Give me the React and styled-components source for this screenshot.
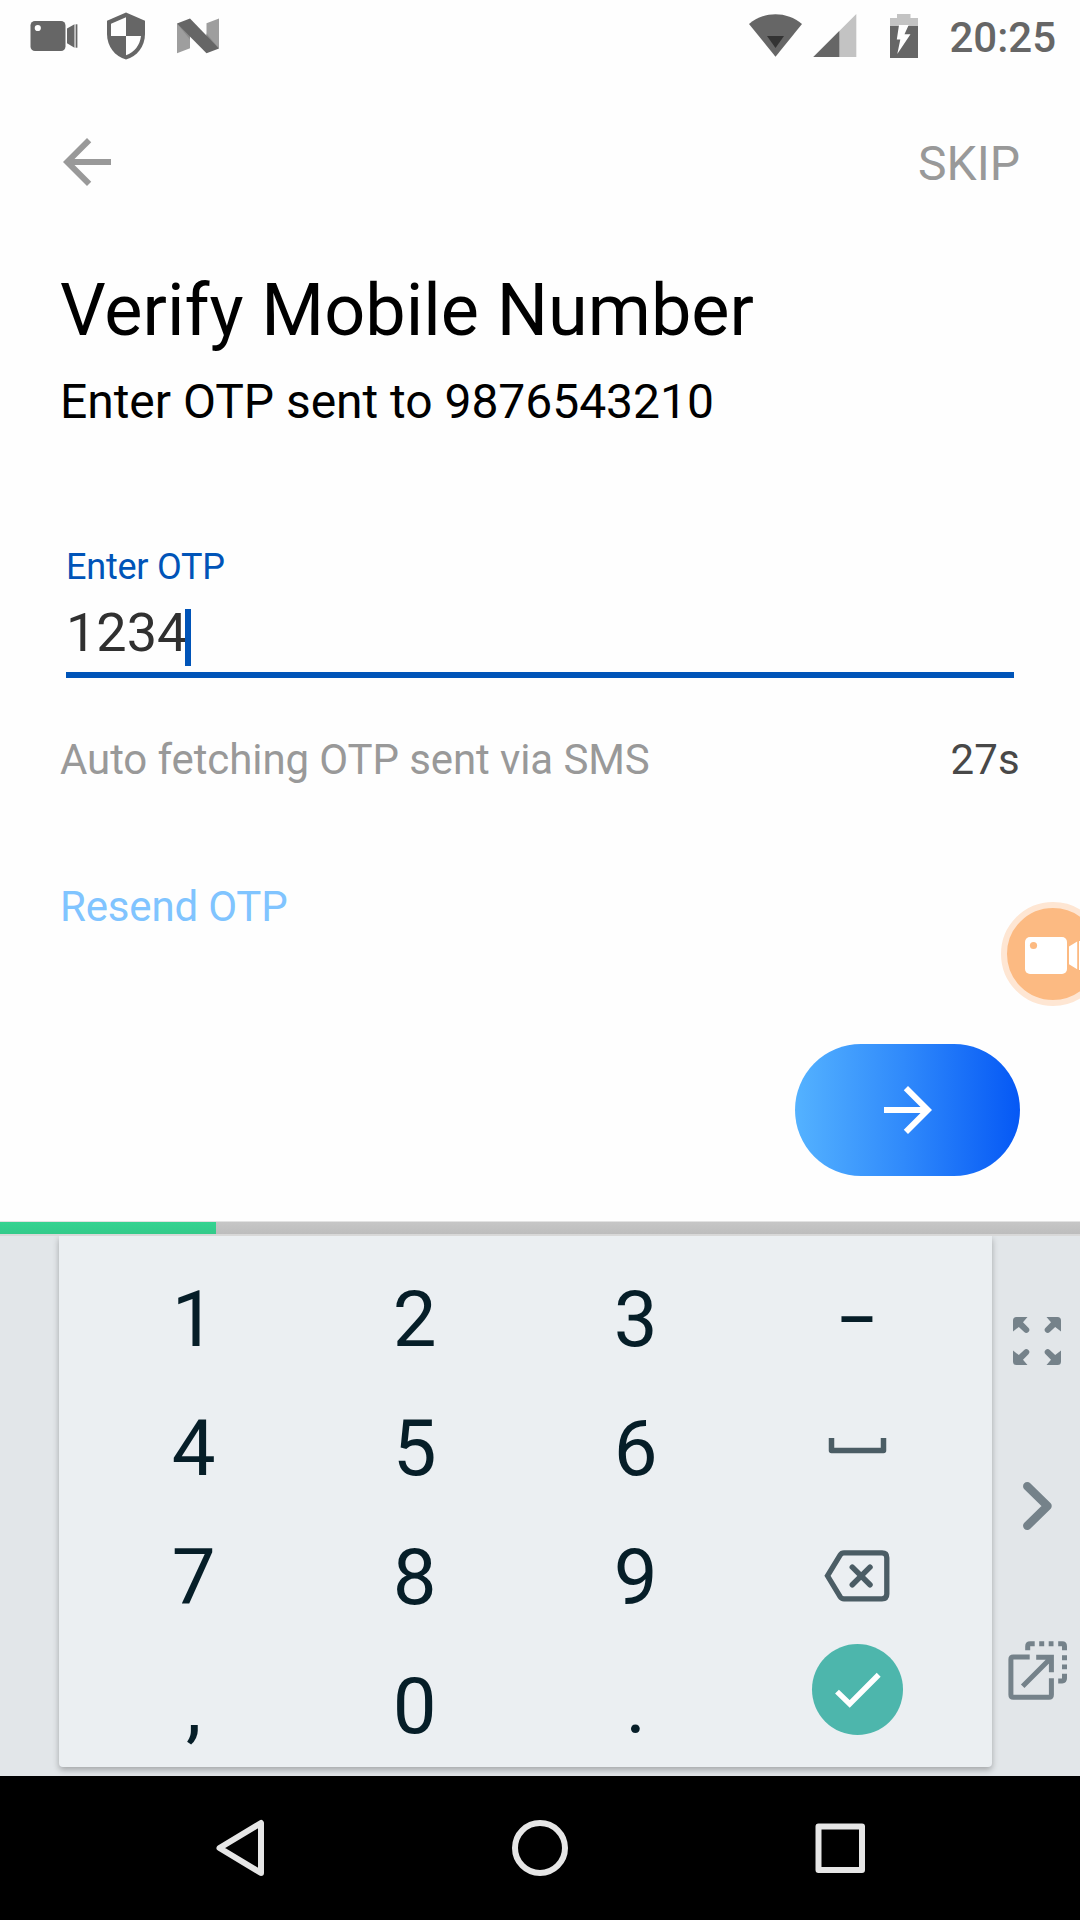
import React from "react";
import styled, { createGlobalStyle } from "styled-components";

const GlobalStyle = createGlobalStyle`
  * { box-sizing: border-box; }
  html, body { margin: 0; padding: 0; background: #fff; }
  button { border: 0; padding: 0; margin: 0; background: none; font: inherit; color: inherit; }
  svg { display: block; flex: none; }
`;

const Screen = styled.div`
  position: relative;
  display: flex;
  flex-direction: column;
  width: 1080px;
  height: 1920px;
  overflow: hidden;
  background: #fefefe;
  font-family: Roboto, "Noto Sans", sans-serif;
  font-weight: 400;
`;

const StatusBar = styled.header`
  display: flex;
  justify-content: space-between;
  height: 72px;
  padding: 0 24px 0 30px;
`;

const StatusGroup = styled.div`
  display: flex;
  align-items: flex-start;
`;

const StatusGap = styled.span`
  width: ${(p) => p.$w}px;
`;

const Clock = styled.time`
  margin-left: 31px;
  font-size: 42px;
  font-weight: 500;
  line-height: 75px;
  color: #666;
`;

const AppBar = styled.nav`
  display: flex;
  align-items: center;
  justify-content: space-between;
  height: 180px;
  padding: 0 60px 0 51px;
`;

const IconButton = styled.button`
  display: flex;
  width: 72px;
  height: 72px;
`;

const SkipButton = styled.button`
  font-size: 48px;
  line-height: 56px;
  margin-top: 3px;
  color: #999;
`;

const Content = styled.main`
  display: flex;
  flex-direction: column;
  height: 969px;
  padding: 17px 60px 0;
`;

const Title = styled.h1`
  margin: 0;
  font-size: 72px;
  font-weight: 400;
  line-height: 84px;
  color: #000;
`;

const Subtitle = styled.p`
  margin: 21px 0 0;
  font-size: 48px;
  line-height: 56px;
  letter-spacing: -0.04px;
  color: #000;
`;

const Field = styled.div`
  display: flex;
  flex-direction: column;
  height: 132px;
  margin: 116px 6px 0;
  border-bottom: 6px solid #0054b8;
`;

const FieldLabel = styled.label`
  font-size: 36px;
  line-height: 42px;
  letter-spacing: -0.22px;
  color: #0054b8;
`;

const FieldValue = styled.div`
  display: flex;
  margin-top: 12px;
  font-size: 54px;
  line-height: 65px;
  color: #303030;
`;

const Caret = styled.span`
  width: 6px;
  height: 57px;
  margin: 9px 0 0 -2px;
  background: #0054b8;
`;

const FetchRow = styled.div`
  display: flex;
  justify-content: space-between;
  margin-top: 57px;
  font-size: 42px;
  line-height: 50px;
  letter-spacing: -0.1px;
  color: #999;
`;

const Countdown = styled.span`
  letter-spacing: 0.2px;
  color: #484848;
`;

const ResendButton = styled.button`
  align-self: flex-start;
  margin-top: 97px;
  font-size: 42px;
  line-height: 50px;
  letter-spacing: -0.18px;
  color: #80c4ff;
`;

const NextButton = styled.button`
  display: flex;
  align-items: center;
  justify-content: center;
  align-self: flex-end;
  width: 225px;
  height: 132px;
  margin-top: 112px;
  border-radius: 66px;
  background: linear-gradient(90deg, #54b2ff, #308afb 48%, #0558f5);
`;

const Progress = styled.div`
  height: 15px;
  border-top: 1px solid #e2e2e2;
  border-bottom: 2px solid #d8d8d8;
  background: linear-gradient(#c6c6c6, #bdbdbd);
`;

const ProgressFill = styled.div`
  width: 20%;
  height: 12px;
  background: linear-gradient(#35d391, #33ca8a);
`;

const Keyboard = styled.section`
  display: flex;
  align-items: flex-start;
  height: 540px;
  padding-left: 59px;
  overflow: hidden;
  background: #e2e6e9;
`;

const KeyPanel = styled.div`
  display: grid;
  grid-template-columns: repeat(4, 221px);
  grid-template-rows: 128.9px 128.9px 128.9px 1fr;
  width: 933px;
  height: 531px;
  padding: 19px 0 0 24.2px;
  border-radius: 0 0 4px 4px;
  background: #ebeff2;
  box-shadow: 0 3px 6px rgba(0, 0, 0, 0.28);
`;

const Key = styled.button`
  display: flex;
  align-items: flex-start;
  justify-content: center;
  padding-top: ${(p) => p.$drop || 0}px;
  font-size: 78px;
  line-height: 129px;
  color: #061e28;
`;

const DashLabel = styled.span`
  font-size: 62px;
  font-weight: 500;
`;

const ConfirmBadge = styled.span`
  display: flex;
  align-items: center;
  justify-content: center;
  width: 91px;
  height: 91px;
  margin-left: 1px;
  border-radius: 50%;
  background: #4db6ac;
`;

const KeyboardRail = styled.aside`
  display: flex;
  flex-direction: column;
  align-items: center;
  gap: 105px;
  flex: 1;
  padding: 75px 0 0 2px;
`;

const NavBar = styled.footer`
  display: flex;
  align-items: center;
  justify-content: space-between;
  height: 144px;
  padding: 0 210px;
  background: #000;
`;

const RecorderBubble = styled.div`
  position: absolute;
  top: 902px;
  left: 1001px;
  display: flex;
  width: 104px;
  height: 104px;
  border: 6px solid #fee6d3;
  border-radius: 50%;
  background: #fcba82;
`;

const CameraIcon = () => (
  <svg width="48" height="72" viewBox="30 0 48 72" fill="#666">
    <rect x="30.5" y="21" width="35" height="30" rx="4.5" />
    <circle cx="37.8" cy="28" r="3.1" fill="#fefefe" />
    <path d="M67 28.5 74.5 24.3V47.7L67 43.2Z" />
    <rect x="75.6" y="24.3" width="1.8" height="23.4" />
  </svg>
);

const ShieldIcon = () => (
  <svg width="40" height="72" viewBox="106 0 40 72">
    <path fill="#666" d="M126 12.5 145 20.8V34C145 46 137 56.8 126 59.5C115 56.8 107 46 107 34V20.8Z" />
    <path fill="#fefefe" d="M126 17.2V36H111V23.8ZM126 36H141C140 45 134.5 52.5 126 55.2Z" />
  </svg>
);

const NougatIcon = () => (
  <svg width="44" height="72" viewBox="176 0 44 72">
    <path fill="#9e9e9e" d="M177 23.5 190 30V48.3L177 53.3ZM206.5 23.3 219 18.5V48.5L206.5 40Z" />
    <path fill="#8c8c8c" d="M177 23.5 190 36.5V39.5ZM219 48.5 206.5 36V33.5Z" />
    <path fill="#666" d="M177 23.5 190 18.5 219 48.5 206.5 53.3Z" />
  </svg>
);

const WifiIcon = () => (
  <svg width="54" height="72" viewBox="749 0 54 72">
    <path fill="#666" d="M749 24C756.5 17.5 766 14.2 775.5 14.2S794.5 17.5 802 24L775.5 56.7Z" />
    <path fill="#333" d="M767 36H784L775.5 48Z" />
  </svg>
);

const SignalIcon = () => (
  <svg width="44" height="72" viewBox="812.7 0 44 72">
    <path fill="#c3c3c3" d="M856 14V57H813Z" />
    <path fill="#666" d="M839 31V57H813Z" />
  </svg>
);

const BatteryIcon = () => (
  <svg width="28" height="72" viewBox="890 0 28 72">
    <path fill="#c3c3c3" d="M897 14H910.5V18H918V27H890V18H897Z" />
    <path fill="#666" d="M890 26H918V58H890Z" />
    <path fill="#fefefe" d="M899 25H908.7L904.5 34.3H910.5L897.3 54 900.3 39.5H896.8Z" />
  </svg>
);

const BackArrow = () => (
  <svg width="72" height="72" viewBox="0 0 24 24" fill="#999">
    <path d="M20 11H7.83l5.59-5.59L12 4l-8 8 8 8 1.41-1.41L7.83 13H20v-2z" />
  </svg>
);

const ForwardArrow = () => (
  <svg width="72" height="72" viewBox="0 0 24 24" fill="#fff">
    <path d="M12 4l-1.41 1.41L16.17 11H4v2h12.17l-5.58 5.59L12 20l8-8z" />
  </svg>
);

const SpaceIcon = () => (
  <svg width="60" height="18" viewBox="0 0 60 18" fill="none" stroke="#4b5d65" strokeWidth="5.5" strokeLinejoin="round">
    <path d="M4.5 1V13.5H56.5V1" />
  </svg>
);

const BackspaceIcon = () => (
  <svg width="66" height="52" viewBox="823.5 1549.7 66 52" fill="none" stroke="#4b5d65" strokeWidth="5.3">
    <path d="M843.5 1552.6H881.5Q886.3 1552.6 886.3 1557.4V1593.8Q886.3 1598.5 881.5 1598.5H843.5Q841 1598.5 839.6 1596.3L827 1575.5L839.6 1554.8Q841 1552.6 843.5 1552.6Z" />
    <path strokeLinecap="round" strokeWidth="5.5" d="M851.8 1566.8 869.5 1584.5M869.5 1566.8 851.8 1584.5" />
  </svg>
);

const CheckIcon = () => (
  <svg width="91" height="91" viewBox="811.8 1644.2 91 91" fill="none" stroke="#fff" strokeWidth="5.5">
    <path d="M836.8 1691.8 849.5 1704.2 878.5 1675" />
  </svg>
);

const ExpandIcon = () => {
  const corner = "M0 3.5Q0 0 3.5 0H14.5L10 5.2 15.4 10.8A2.8 2.8 0 0 1 11.2 15L5.8 10 0 14.5Z";
  return (
    <svg width="60" height="60" viewBox="-6 -6 60 60" fill="#75828a">
      <path d={corner} />
      <path d={corner} transform="translate(48 0) scale(-1 1)" />
      <path d={corner} transform="translate(0 48) scale(1 -1)" />
      <path d={corner} transform="translate(48 48) scale(-1 -1)" />
    </svg>
  );
};

const ChevronIcon = () => (
  <svg width="60" height="60" viewBox="1007 1476 60 60" fill="none" stroke="#75828a" strokeWidth="8.5" strokeLinecap="round" strokeLinejoin="round">
    <path d="M1027.3 1486.3 1047.5 1506 1027.3 1525.7" />
  </svg>
);

const FloatIcon = () => (
  <svg width="60" height="60" viewBox="1006.8 1640.7 60 60" fill="none" stroke="#75828a" strokeWidth="5">
    <path d="M1029.5 1656.7H1013Q1010.7 1656.7 1010.7 1659V1694.5Q1010.7 1697 1013 1697H1048.8Q1051.2 1697 1051.2 1694.5V1678" />
    <path d="M1036 1657H1051.2V1672M1022.5 1686 1050.5 1658" />
    <path d="M1027.5 1650V1646Q1027.5 1643.5 1030 1643.5H1034.5M1039 1643.5H1044M1048.5 1643.5H1053.3M1058 1643.5H1062Q1064.3 1643.5 1064.3 1646V1650M1064.3 1655V1660M1064.3 1664.3V1669M1064.3 1673.5V1678Q1064.3 1680.6 1062 1680.6H1058" />
  </svg>
);

const NavIcon = ({ children }) => (
  <svg width="60" height="60" viewBox="0 0 60 60" fill="none" stroke="#e6e6e6" strokeWidth="6" strokeLinejoin="round">
    {children}
  </svg>
);

const keyRows = [
  ["1", "2", "3", "dash"],
  ["4", "5", "6", "space"],
  ["7", "8", "9", "backspace"],
  [",", "0", ".", "confirm"],
];

const specialKeys = {
  dash: { drop: 0, icon: <DashLabel>–</DashLabel> },
  space: { drop: 52.7, icon: <SpaceIcon /> },
  backspace: { drop: 37.4, icon: <BackspaceIcon /> },
  confirm: { drop: 2.1, icon: <ConfirmBadge><CheckIcon /></ConfirmBadge> },
};

export default function App() {
  return (
    <Screen>
      <GlobalStyle />
      <StatusBar>
        <StatusGroup>
          <CameraIcon />
          <StatusGap $w={28} />
          <ShieldIcon />
          <StatusGap $w={30} />
          <NougatIcon />
        </StatusGroup>
        <StatusGroup>
          <WifiIcon />
          <StatusGap $w={10} />
          <SignalIcon />
          <StatusGap $w={33} />
          <BatteryIcon />
          <Clock>20:25</Clock>
        </StatusGroup>
      </StatusBar>
      <AppBar>
        <IconButton aria-label="Back"><BackArrow /></IconButton>
        <SkipButton>SKIP</SkipButton>
      </AppBar>
      <Content>
        <Title>Verify Mobile Number</Title>
        <Subtitle>Enter OTP sent to 9876543210</Subtitle>
        <Field>
          <FieldLabel>Enter OTP</FieldLabel>
          <FieldValue>1234<Caret /></FieldValue>
        </Field>
        <FetchRow>
          <span>Auto fetching OTP sent via SMS</span>
          <Countdown>27s</Countdown>
        </FetchRow>
        <ResendButton>Resend OTP</ResendButton>
        <NextButton aria-label="Next"><ForwardArrow /></NextButton>
      </Content>
      <Progress><ProgressFill /></Progress>
      <Keyboard>
        <KeyPanel>
          {keyRows.flat().map((k) => {
            const special = specialKeys[k];
            return special ? (
              <Key key={k} aria-label={k} $drop={special.drop}>{special.icon}</Key>
            ) : (
              <Key key={k}>{k}</Key>
            );
          })}
        </KeyPanel>
        <KeyboardRail>
          <ExpandIcon />
          <ChevronIcon />
          <FloatIcon />
        </KeyboardRail>
      </Keyboard>
      <NavBar>
        <NavIcon><path d="M9.5 30 51 5V55Z" /></NavIcon>
        <NavIcon><circle cx="30" cy="30" r="25" /></NavIcon>
        <NavIcon><rect x="8.5" y="8.5" width="43.5" height="43.5" /></NavIcon>
      </NavBar>
      <RecorderBubble>
        <svg width="92" height="92" viewBox="1007 908 92 92" fill="#fff">
          <rect x="1025" y="937" width="42" height="37" rx="5" />
          <circle cx="1033.5" cy="945.5" r="3.6" fill="#fcba82" />
          <path d="M1069 946.5 1077.2 941.5V969.3L1069 964.3Z" />
          <rect x="1079" y="941" width="2.5" height="29" />
        </svg>
      </RecorderBubble>
    </Screen>
  );
}
